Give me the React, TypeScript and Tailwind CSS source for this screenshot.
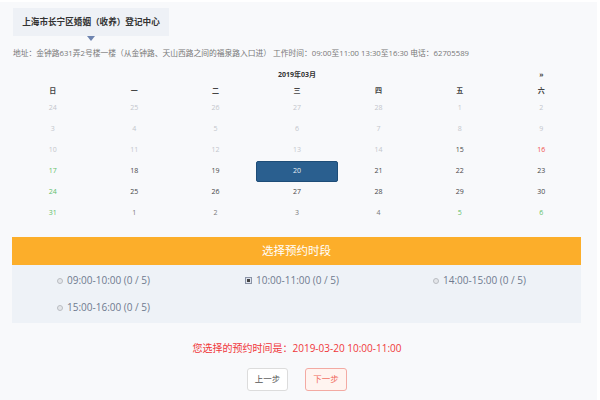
import React from "react";

type Cell = { d: number; c: string; sel?: boolean };

const L = "text-[#c3c6cc]";
const D = "text-[#474747] font-medium";
const G = "text-[#62bf6a]";
const R = "text-[#f0504a] font-medium";
const M = "text-[#7a7a7a]";

const rows: Cell[][] = [
  [24, 25, 26, 27, 28, 1, 2].map((d) => ({ d, c: L })),
  [3, 4, 5, 6, 7, 8, 9].map((d) => ({ d, c: L })),
  [
    { d: 10, c: L },
    { d: 11, c: L },
    { d: 12, c: L },
    { d: 13, c: L },
    { d: 14, c: L },
    { d: 15, c: D },
    { d: 16, c: R },
  ],
  [
    { d: 17, c: G },
    { d: 18, c: D },
    { d: 19, c: D },
    { d: 20, c: "text-[#e8eef5]", sel: true },
    { d: 21, c: D },
    { d: 22, c: D },
    { d: 23, c: D },
  ],
  [
    { d: 24, c: G },
    { d: 25, c: D },
    { d: 26, c: D },
    { d: 27, c: D },
    { d: 28, c: D },
    { d: 29, c: D },
    { d: 30, c: D },
  ],
  [
    { d: 31, c: G },
    { d: 1, c: M },
    { d: 2, c: M },
    { d: 3, c: M },
    { d: 4, c: M },
    { d: 5, c: G },
    { d: 6, c: G },
  ],
];

const weekdays = ["日", "一", "二", "三", "四", "五", "六"];

function Radio() {
  return (
    <span className="inline-block w-[6px] h-[6px] rounded-full border border-[#b9bcc2] bg-[#e4e6ea] shrink-0" />
  );
}

function Checked() {
  return (
    <span className="inline-flex items-center justify-center w-[7px] h-[7px] border border-[#8a93a6] bg-[#dfe4ee] shrink-0">
      <span className="w-[3px] h-[3px] bg-[#444]" />
    </span>
  );
}

function Opt({ label, checked }: { label: string; checked?: boolean }) {
  return (
    <div className="flex items-center gap-[4px] pl-[45px] h-[27px]">
      {checked ? <Checked /> : <Radio />}
      <span className="text-[10px] text-[#6f7a8f]">{label}</span>
    </div>
  );
}

export default function App() {
  return (
    <div
      className="w-[600px] h-[400px] bg-white overflow-hidden"
      style={{ fontFamily: '"Open Sans", "Noto Sans CJK SC", sans-serif' }}
    >
      <div className="mt-[2px] w-[597px] h-[398px] bg-[#f8f9fb] flex flex-col">
        <div className="pl-[13px] pt-[6px]">
          <div className="w-[156px] h-[28px] bg-[#eef1f6] flex items-center justify-center">
            <span className="text-[8.6px] font-bold text-[#333]">上海市长宁区婚姻（收养）登记中心</span>
          </div>
          <div className="ml-[74px] w-0 h-0 border-l-[4.5px] border-r-[4.5px] border-t-[5px] border-l-transparent border-r-transparent border-t-[#6e84b0]" />
        </div>
        <div className="pl-[13px] h-[20px] flex items-center text-[7.75px] text-[#777] whitespace-nowrap mt-[3px]">
          地址：金钟路631弄2号楼一楼（从金钟路、天山西路之间的福泉路入口进） 工作时间：09:00至11:00 13:30至16:30 电话：62705589
        </div>

        <div className="mx-[12px] w-[570px] mt-[2px]">
          <div className="grid grid-cols-7 h-[18px] items-center">
            <div className="col-span-1" />
            <div className="col-span-1" />
            <div className="col-span-3 text-center text-[7px] font-bold text-[#333]">2019年03月</div>
            <div className="col-span-1" />
            <div className="col-span-1 text-center text-[7px] font-bold text-[#444]">»</div>
          </div>
          <div className="grid grid-cols-7 h-[14px] items-center">
            {weekdays.map((w) => (
              <div key={w} className="text-center text-[7px] font-bold text-[#444]">
                {w}
              </div>
            ))}
          </div>
          {rows.map((r, i) => (
            <div key={i} className="grid grid-cols-7 h-[21px]">
              {r.map((c, j) => (
                <div
                  key={j}
                  className={
                    "flex items-center justify-center text-[7px] " +
                    c.c +
                    (c.sel ? " bg-[#2a5f8f] border border-[#1e4d78] rounded-[2px]" : "")
                  }
                >
                  {c.d}
                </div>
              ))}
            </div>
          ))}
        </div>

        <div className="mx-[12px] w-[569px] mt-[13px]">
          <div className="h-[28px] bg-[#fcae2a] flex items-center justify-center">
            <span className="text-[11.5px] text-white">选择预约时段</span>
          </div>
          <div className="h-[58px] bg-[#eef2f7] pt-[2px]">
            <div className="grid grid-cols-[188px_188px_1fr]">
              <Opt label="09:00-10:00 (0 / 5)" />
              <Opt label="10:00-11:00 (0 / 5)" checked />
              <Opt label="14:00-15:00 (0 / 5)" />
              <Opt label="15:00-16:00 (0 / 5)" />
            </div>
          </div>
        </div>

        <div className="w-[594px] mt-[18px] h-[14px] flex items-center justify-center text-[10px] text-[#f0373a]">
          您选择的预约时间是：2019-03-20 10:00-11:00
        </div>

        <div className="w-[594px] mt-[13px] flex justify-center gap-[17px]">
          <button className="w-[41px] h-[23px] bg-white border border-[#dcdcdc] rounded-[3px] text-[8.5px] text-[#555] flex items-center justify-center">
            上一步
          </button>
          <button className="w-[42px] h-[23px] bg-[#fff4f0] border border-[#f3aaa3] rounded-[3px] text-[8.5px] text-[#f0695a] flex items-center justify-center">
            下一步
          </button>
        </div>
      </div>
    </div>
  );
}
